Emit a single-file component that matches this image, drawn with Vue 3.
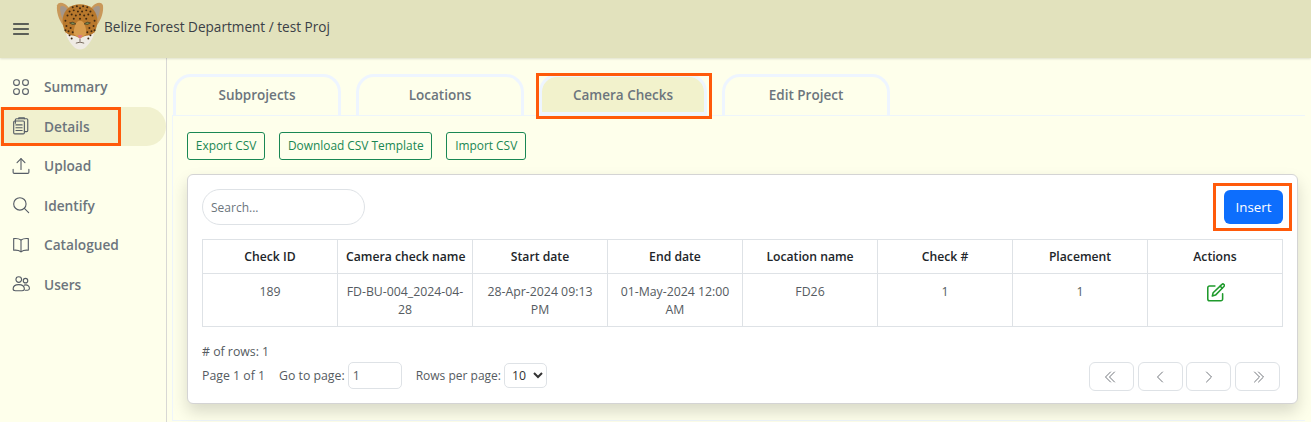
<template>
  <div class="app-shell">
    <header class="top-bar">
      <button class="menu-button" type="button" aria-label="Menu">
        <svg width="18" height="18" viewBox="0 0 16 16" fill="none" stroke="#2f3437" stroke-width="1.3" stroke-linecap="round">
          <path d="M1.5 3.5h13M1.5 8h13M1.5 12.5h13" />
        </svg>
      </button>
      <svg class="logo" width="50" height="48" viewBox="1 2 48 46">
        <path d="M3 5C5 1 10 3 13 6l5 5-8 15C5 20 2 12 3 5Z" fill="#c9985a" />
        <path d="M6 7c1-2 4-1 6 1l3 4-5 9C7 16 5.500 11 6 7Z" fill="#a5978a" />
        <path d="M47 5C45 1 40 3 37 6l-5 5 8 15C45 20 48 12 47 5Z" fill="#c9985a" />
        <path d="M44 7c-1-2-4-1-6 1l-3 4 5 9C43 16 44.500 11 44 7Z" fill="#a5978a" />
        <path d="M25 4c9 0 15 5 16.500 13 1 7-2 15-6.500 20l-10 4-10-4C10.500 32 7.500 24 8.500 17 10 9 16 4 25 4Z" fill="#b8782c" />
        <path d="M25 20c4 0 6 6 6 13l-6 4-6-4c0-7 2-13 6-13Z" fill="#d89c4e" />
        <path d="M11 31c4 4 8 2 14 6 6-4 10-2 14-6-2 7-5 11-8 14-3 3.500-9 3.500-12 0-3-3-6-7-8-14Z" fill="#efebe4" />
        <path d="M22.500 34h5L25 37.500Z" fill="#dc7484" />
        <path d="M25 37.500V40M21 41.500q4-2 8 0" stroke="#4b3a2c" stroke-width=".7" fill="none" />
        <path d="M15 22q3.500-2 6 1-3.500 1.500-6-1Z" fill="#7f9156" stroke="#3b2a1a" stroke-width=".6" />
        <path d="M35 22q-3.500-2-6 1 3.500 1.500 6-1Z" fill="#7f9156" stroke="#3b2a1a" stroke-width=".6" />
        <g fill="#3f2810">
          <circle v-for="spot in logoSpots" :key="`${spot[0]}-${spot[1]}`" :cx="spot[0]" :cy="spot[1]" r=".95" />
        </g>
      </svg>
      <span class="project-title">Belize Forest Department / test Proj</span>
    </header>

    <div class="page-body">
      <aside class="side-nav">
        <a v-for="item in navItems" :key="item.label" class="nav-item" :class="{ active: item.active }">
          <svg width="18" height="18" viewBox="0 0 16 16" fill="none" stroke="#565d66" stroke-width="1" stroke-linecap="round" stroke-linejoin="round">
            <path v-for="d in item.paths" :key="d" :d="d" />
          </svg>
          <span>{{ item.label }}</span>
          <i v-if="item.active" class="mark mark-nav"></i>
        </a>
      </aside>

      <main class="content">
        <nav class="tabs">
          <button
            v-for="tab in tabs"
            :key="tab.label"
            class="tab"
            :class="{ active: tab.active }"
            type="button"
          >
            {{ tab.label }}
            <i v-if="tab.active" class="mark mark-tab"></i>
          </button>
        </nav>

        <section class="tab-pane">
          <div class="csv-row">
            <button v-for="label in csvActions" :key="label" class="csv-button" type="button">{{ label }}</button>
          </div>

          <div class="table-card">
            <div class="card-top">
              <input class="search-input" type="text" placeholder="Search..." />
              <button class="insert-button" type="button">
                Insert
                <i class="mark mark-insert"></i>
              </button>
            </div>

            <table class="data-table">
              <thead>
                <tr>
                  <th v-for="col in columns" :key="col">{{ col }}</th>
                </tr>
              </thead>
              <tbody>
                <tr>
                  <td>189</td>
                  <td>FD-BU-004_2024-04-28</td>
                  <td>28-Apr-2024 09:13 PM</td>
                  <td>01-May-2024 12:00 AM</td>
                  <td>FD26</td>
                  <td>1</td>
                  <td>1</td>
                  <td>
                    <svg class="edit-icon" width="19" height="19" viewBox="0 0 16 16" fill="none" stroke="#1f9a2c" stroke-width="1.3" stroke-linecap="round" stroke-linejoin="round">
                      <path d="M7.500 2.500H3A1.500 1.500 0 0 0 1.500 4v9.500A1.500 1.500 0 0 0 3 15h9.500a1.500 1.500 0 0 0 1.500-1.500V9" />
                      <path d="M13.400 1.200a1.200 1.200 0 0 1 1.700 1.700L8 10.200l-2.700.8.700-2.800Z" />
                      <path d="M12 2.700l1.600 1.600" />
                    </svg>
                  </td>
                </tr>
              </tbody>
            </table>

            <div class="table-footer">
              <div class="footer-info">
                <div class="row-count"># of rows: 1</div>
                <div class="page-controls">
                  <span>Page 1 of 1</span>
                  <label class="goto-label">
                    Go to page:
                    <input class="goto-input" type="number" value="1" />
                  </label>
                  <label class="size-label">
                    Rows per page:
                    <select class="size-select">
                      <option>10</option>
                    </select>
                  </label>
                </div>
              </div>
              <div class="pager">
                <button v-for="btn in pagerButtons" :key="btn" class="pager-button" type="button">
                  <svg width="16" height="16" viewBox="0 0 16 16" fill="none" stroke="#73777d" stroke-width="1" stroke-linecap="round" stroke-linejoin="round">
                    <path :d="btn" />
                  </svg>
                </button>
              </div>
            </div>
          </div>
        </section>
      </main>
    </div>
  </div>
</template>

<script setup>
const logoSpots = [
  [18, 7], [22, 6], [25, 8], [28, 6], [32, 7], [15, 11], [19, 10], [23, 11], [27, 11], [31, 10], [35, 11],
  [13, 15], [17, 14], [21, 15], [25, 14], [29, 15], [33, 14], [37, 15], [11, 20], [39, 20], [12, 25],
  [16, 27], [38, 25], [34, 27], [14, 30], [36, 30], [19, 18], [31, 18], [25, 18], [18, 31], [32, 31],
  [11, 29], [39, 29], [15, 34], [35, 34], [17, 37], [33, 37],
]

const navItems = [
  { label: 'Summary', paths: ['M3.500 1.500h1a2 2 0 0 1 2 2v1a2 2 0 0 1-2 2h-1a2 2 0 0 1-2-2v-1a2 2 0 0 1 2-2Z', 'M11.500 1.500h1a2 2 0 0 1 2 2v1a2 2 0 0 1-2 2h-1a2 2 0 0 1-2-2v-1a2 2 0 0 1 2-2Z', 'M3.500 9.500h1a2 2 0 0 1 2 2v1a2 2 0 0 1-2 2h-1a2 2 0 0 1-2-2v-1a2 2 0 0 1 2-2Z', 'M11.500 9.500h1a2 2 0 0 1 2 2v1a2 2 0 0 1-2 2h-1a2 2 0 0 1-2-2v-1a2 2 0 0 1 2-2Z'] },
  { label: 'Details', active: true, paths: ['M3 3.500H2.500a1 1 0 0 0-1 1v9.500a1 1 0 0 0 1 1h7.500a1 1 0 0 0 1-1v-1', 'M3 5.500V2.500a1 1 0 0 1 1-1h9a1 1 0 0 1 1 1v9.500a1 1 0 0 1-1 1h-2V4.500a1 1 0 0 0-1-1H3', 'M6 1.500V.8h5v.7', 'M3.500 7h5.500M3.500 9.500h5.500M3.500 12h5.500'] },
  { label: 'Upload', paths: ['M1 11v2.500a1 1 0 0 0 1 1h12a1 1 0 0 0 1-1V11', 'M8 11V1.500', 'M4.500 5 8 1.500 11.500 5'] },
  { label: 'Identify', paths: ['M7 1.500a5.500 5.500 0 1 1 0 11 5.500 5.500 0 0 1 0-11Z', 'M11 11l3.800 3.800'] },
  { label: 'Catalogued', paths: ['M8 3.500C6.500 2.500 4 2 1.500 2.300v10.400C4 12.400 6.500 13 8 14c1.500-1 4-1.600 6.500-1.300V2.300C12 2 9.500 2.500 8 3.500Z', 'M8 3.500V14'] },
  { label: 'Users', paths: ['M6 1.500a2.500 2.500 0 1 1 0 5 2.500 2.500 0 0 1 0-5Z', 'M12 3a2 2 0 1 1 0 4 2 2 0 0 1 0-4Z', 'M1 12.500C1 10 3 8.500 6 8.500s5 1.500 5 4c0 1-1 1.500-2 1.500H3c-1 0-2-.5-2-1.500Z', 'M11 9c2.500-.8 4.500.8 4.500 2.800 0 1-.6 1.700-1.500 1.700h-2'] },
]

const tabs = [
  { label: 'Subprojects' },
  { label: 'Locations' },
  { label: 'Camera Checks', active: true },
  { label: 'Edit Project' },
]

const csvActions = ['Export CSV', 'Download CSV Template', 'Import CSV']

const columns = ['Check ID', 'Camera check name', 'Start date', 'End date', 'Location name', 'Check #', 'Placement', 'Actions']

const pagerButtons = [
  'M7.500 3 2.500 8l5 5M11.500 3l-5 5 5 5',
  'M10.500 3 5.500 8l5 5',
  'M5.500 3l5 5-5 5',
  'M4.500 3l5 5-5 5M8.500 3l5 5-5 5',
]
</script>

<style>
html,
body {
  margin: 0;
  background: #feffeb;
}
</style>

<style scoped>
.app-shell {
  height: 422px;
  overflow: hidden;
  display: flex;
  flex-direction: column;
  background: #feffeb;
  color: #6c757d;
  font-family: "Open Sans", "Noto Sans", sans-serif;
  font-size: 12px;
}

.top-bar {
  height: 58px;
  flex: 0 0 auto;
  display: flex;
  align-items: center;
  padding-left: 12px;
  background: #e2e2bd;
  box-shadow: 0 1px 2px rgba(0, 0, 0, 0.12);
  position: relative;
}

.menu-button {
  width: 18px;
  height: 18px;
  padding: 0;
  border: 0;
  background: none;
  display: flex;
}

.logo {
  margin-left: 25px;
  margin-top: -7px;
}

.project-title {
  margin-left: -1px;
  margin-top: -5px;
  color: #3a4046;
  font-size: 13.600px;
}

.page-body {
  flex: 1;
  display: flex;
  min-height: 0;
}

.side-nav {
  width: 166px;
  flex: 0 0 auto;
  padding-top: 9.200px;
  border-right: 1px solid #d8d8d4;
}

.nav-item {
  height: 39.500px;
  display: flex;
  align-items: center;
  gap: 14px;
  padding-left: 12px;
  position: relative;
  color: #6c757d;
  font-size: 13.700px;
  font-weight: 600;
}

.nav-item.active {
  background: #f1f1cf;
  border-radius: 0 20px 20px 0;
}

.mark {
  position: absolute;
  border: 3px solid #ff5a0a;
  box-sizing: border-box;
  pointer-events: none;
}

.mark-nav {
  left: 1px;
  top: 0;
  width: 120px;
  height: 39px;
}

.mark-tab {
  left: -6px;
  top: -4px;
  right: -8px;
  bottom: -7px;
}

.mark-insert {
  left: -11px;
  top: -7px;
  right: -9px;
  bottom: -7px;
}

.content {
  flex: 1;
  min-width: 0;
  padding: 16px 6px 0 5px;
}

.tabs {
  display: flex;
  gap: 15px;
  height: 42px;
  padding-left: 1px;
  box-sizing: border-box;
  border-bottom: 1px solid #eef5fb;
}

.tab {
  width: 168px;
  height: 41px;
  padding: 0 0 3px;
  position: relative;
  border: 3px solid #eef5ff;
  border-bottom: 0;
  border-radius: 18px 18px 0 0;
  background: #feffeb;
  color: #6c757d;
  font: 600 13.500px "Open Sans", "Noto Sans", sans-serif;
}

.tab.active {
  padding: 0;
  background: #f2f2cc;
  border-bottom: 3px solid #eef5ff;
}

.tab-pane {
  height: 305px;
  box-sizing: border-box;
  padding: 16px 7px 0 14px;
  border-left: 1px solid #eef5fb;
  border-bottom: 1px solid #eef5fb;
}

.csv-row {
  display: flex;
  gap: 14px;
}

.csv-button {
  height: 28px;
  padding: 0 7.800px 2px;
  border: 1px solid #198754;
  border-radius: 3px;
  background: none;
  color: #198754;
  font: 11.900px "Open Sans", "Noto Sans", sans-serif;
}

.table-card {
  margin-top: 14px;
  height: 230px;
  box-sizing: border-box;
  padding: 14px 14px 0;
  border: 1px solid #d4d4d4;
  border-radius: 6px;
  background: #fff;
  box-shadow: 0 8px 16px rgba(0, 0, 0, 0.15);
}

.card-top {
  display: flex;
  justify-content: space-between;
  height: 36px;
}

.search-input {
  width: 163px;
  height: 36px;
  box-sizing: border-box;
  padding: 0 8px;
  border: 1px solid #dee2e6;
  border-radius: 18px;
  font: 12px "Open Sans", "Noto Sans", sans-serif;
  outline: none;
}

.search-input::placeholder {
  color: #6c757d;
}

.insert-button {
  width: 59px;
  height: 34px;
  margin-top: 1px;
  position: relative;
  border: 0;
  border-radius: 6px;
  background: #0d6efd;
  color: #fff;
  font: 13.300px "Open Sans", "Noto Sans", sans-serif;
}

.data-table {
  width: 1081px;
  margin-top: 14px;
  table-layout: fixed;
  border-collapse: collapse;
  font-size: 12.300px;
  color: #555b61;
}

.data-table th,
.data-table td {
  border: 1px solid #dee2e6;
  text-align: center;
  padding: 0 8px;
}

.data-table th {
  height: 33px;
  color: #212529;
  font-size: 12.200px;
  font-weight: 600;
  white-space: nowrap;
}

.data-table td {
  height: 53px;
  vertical-align: top;
  padding-top: 9px;
  box-sizing: border-box;
  line-height: 18px;
  overflow-wrap: anywhere;
}

.edit-icon {
  display: block;
  margin: 0 auto;
}

.table-footer {
  margin-top: 16px;
  display: flex;
  justify-content: space-between;
  align-items: flex-end;
  font-size: 12.300px;
}

.row-count {
  line-height: 18px;
  color: #555b61;
}

.page-controls {
  margin-top: 1px;
  display: flex;
  align-items: center;
  color: #555b61;
}

.goto-label {
  margin-left: 14px;
  display: flex;
  align-items: center;
  gap: 3px;
}

.goto-input {
  width: 54px;
  height: 27px;
  box-sizing: border-box;
  padding: 0 4px;
  border: 1px solid #dee2e6;
  border-radius: 5px;
  color: #555b61;
  font: 12.300px "Open Sans", "Noto Sans", sans-serif;
  outline: none;
  appearance: textfield;
}

.size-label {
  margin-left: 14px;
  display: flex;
  align-items: center;
  gap: 3px;
  font-size: 12px;
}

.size-select {
  width: 43px;
  height: 25px;
  padding: 0 0 0 3px;
  border: 1px solid #dee2e6;
  border-radius: 5px;
  background: #fff;
  color: #333;
  font: 12.300px "Open Sans", "Noto Sans", sans-serif;
}

.pager {
  display: flex;
  gap: 3.700px;
  margin: 0 3px -2px 0;
}

.pager-button {
  width: 45px;
  height: 29px;
  padding: 0;
  display: flex;
  align-items: center;
  justify-content: center;
  border: 1px solid #dee2e6;
  border-radius: 6px;
  background: #fff;
}
</style>
